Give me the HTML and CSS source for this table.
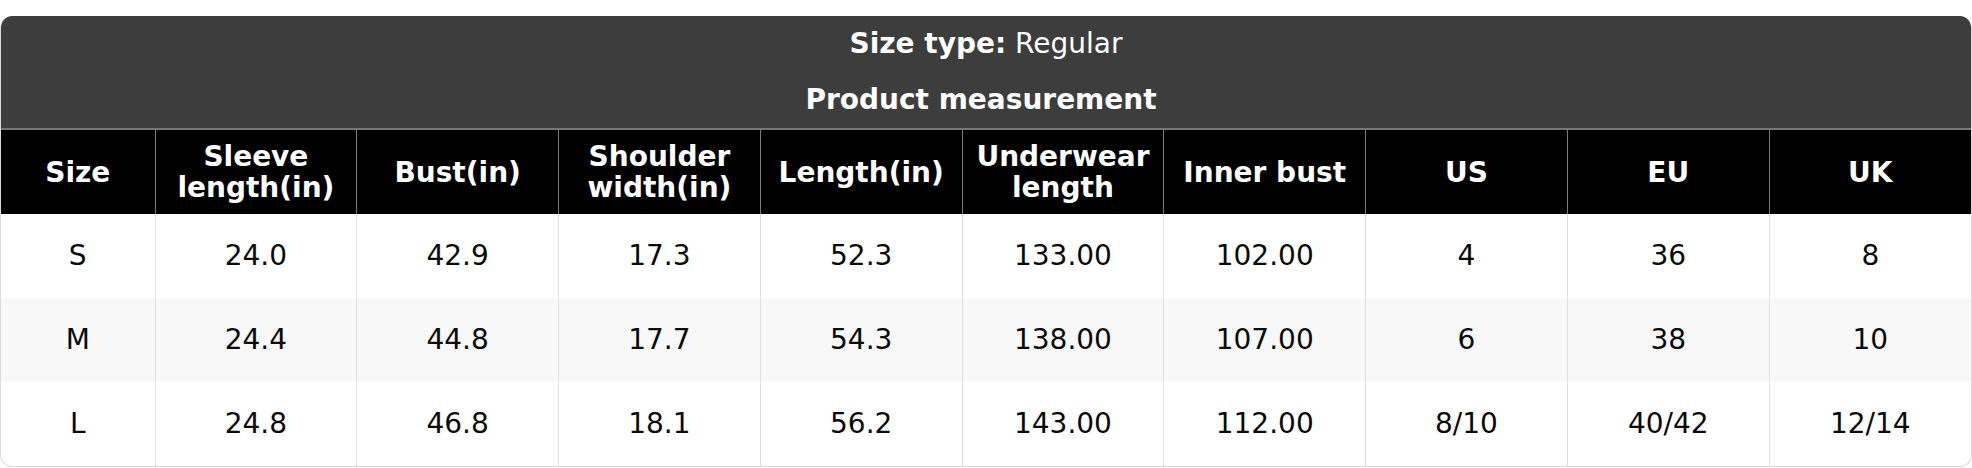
FILE: index.html
```html
<!DOCTYPE html>
<html>
<head>
<meta charset="utf-8">
<link rel="stylesheet" href="styles.css">
</head>
<body>
<div class="wrap">
  <div class="card">
    <table class="size-table">
      <colgroup>
        <col class="col-size">
        <col><col><col><col><col><col><col><col><col>
      </colgroup>
      <thead>
        <tr class="title-row">
          <th colspan="10"><strong>Size type:</strong> Regular</th>
        </tr>
        <tr class="title-row title-sub">
          <th colspan="10"><strong>Product measurement</strong></th>
        </tr>
        <tr class="head-row">
          <th>Size</th>
          <th>Sleeve<br>length(in)</th>
          <th>Bust(in)</th>
          <th>Shoulder<br>width(in)</th>
          <th>Length(in)</th>
          <th>Underwear<br>length</th>
          <th>Inner bust</th>
          <th>US</th>
          <th>EU</th>
          <th>UK</th>
        </tr>
      </thead>
      <tbody>
        <tr>
          <td>S</td><td>24.0</td><td>42.9</td><td>17.3</td><td>52.3</td><td>133.00</td><td>102.00</td><td>4</td><td>36</td><td>8</td>
        </tr>
        <tr class="alt">
          <td>M</td><td>24.4</td><td>44.8</td><td>17.7</td><td>54.3</td><td>138.00</td><td>107.00</td><td>6</td><td>38</td><td>10</td>
        </tr>
        <tr>
          <td>L</td><td>24.8</td><td>46.8</td><td>18.1</td><td>56.2</td><td>143.00</td><td>112.00</td><td>8/10</td><td>40/42</td><td>12/14</td>
        </tr>
      </tbody>
    </table>
  </div>
</div>
</body>
</html>
```

FILE: styles.css
```css
html, body {
  margin: 0;
  padding: 0;
  background: #ffffff;
}

.wrap {
  padding-top: 16px;
}

.card {
  border: 1px solid #dcdcdc;
  border-top: none;
  border-radius: 12px;
  overflow: hidden;
  background: #ffffff;
}

.size-table {
  width: 100%;
  border-collapse: collapse;
  table-layout: fixed;
  font-family: "DejaVu Sans", Verdana, sans-serif;
  font-size: 28px;
  text-align: center;
}

.col-size {
  width: 154px;
}

.title-row th {
  background: #3d3d3d;
  color: #ffffff;
  font-weight: normal;
  height: 56px;
  padding: 0;
  line-height: 32px;
}

.title-sub th {
  padding-right: 10px;
}

.title-row strong {
  font-weight: bold;
}

.head-row th {
  background: #000000;
  color: #ffffff;
  font-weight: bold;
  line-height: 31px;
  height: 85px;
  padding: 0 2px;
  border-top: 2px solid #777777;
  border-left: 1px solid #7a7a7a;
  box-sizing: border-box;
}

.head-row th:first-child {
  border-left: none;
}

tbody td {
  height: 84px;
  padding: 0;
  color: #0a0a0a;
  line-height: 32px;
  border-left: 1px solid #dddddd;
}

tbody td:first-child {
  border-left: none;
}

tbody tr.alt td {
  background: #f8f8f8;
}
```
